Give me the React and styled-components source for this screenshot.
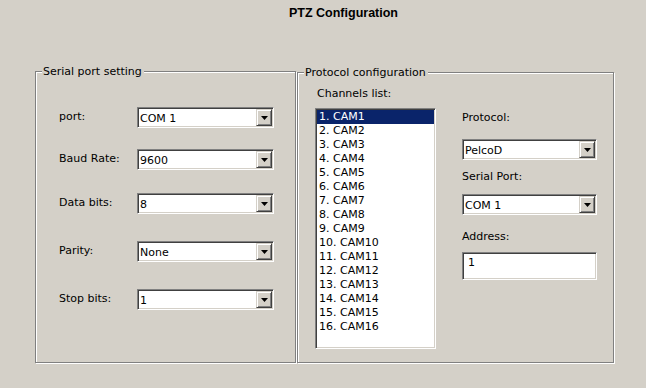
import React from 'react';
import styled, { createGlobalStyle } from 'styled-components';

const GlobalStyle = createGlobalStyle`
  body {
    margin: 0;
    background: #d4d0c8;
    font-family: "DejaVu Sans", "Liberation Sans", sans-serif;
    font-size: 11px;
    color: #000;
  }
`;

const Page = styled.div`
  width: 646px;
  height: 388px;
  background: #d4d0c8;
  display: flex;
  flex-direction: column;
`;

const Title = styled.div`
  margin-top: 5px;
  padding-left: 41px;
  line-height: 16px;
  text-align: center;
  font-family: "Liberation Sans", Arial, sans-serif;
  font-weight: bold;
  font-size: 12.5px;
`;

const Panels = styled.div`
  display: flex;
  align-items: flex-start;
  gap: 1px;
  margin-top: 50px;
  padding-left: 35px;
`;

// etched frame, like a win32 group box
const Group = styled.div`
  position: relative;
  box-sizing: border-box;
  width: ${({ $w }) => $w}px;
  height: ${({ $h }) => $h}px;
  margin-top: ${({ $top }) => $top || 0}px;
  border: 1px solid #808080;
  box-shadow: inset 1px 1px #fff, 1px 1px #fff;
`;

const Legend = styled.div`
  position: absolute;
  top: -7px;
  left: 6px;
  padding: 0 2px 0 1px;
  line-height: 13px;
  background: #d4d0c8;
  white-space: nowrap;
`;

const SerialBody = styled.div`
  display: flex;
  flex-direction: column;
  padding-left: 23px;
`;

const Row = styled.div`
  display: flex;
  align-items: center;
  margin-top: ${({ $top }) => $top}px;
`;

const Label = styled.div`
  width: 78px;
  line-height: 13px;
  padding-bottom: 3px;
  white-space: nowrap;
`;

const Combo = styled.div`
  box-sizing: border-box;
  width: ${({ $w }) => $w}px;
  height: 21px;
  display: flex;
  align-items: center;
  background: #fff;
  border: 1px solid;
  border-color: #808080 #fff #fff #808080;
  box-shadow: inset 1px 1px #404040, inset -1px -1px #d4d0c8;
  padding: 1px 1px 1px 2px;
`;

const ComboText = styled.div`
  flex: 1;
  line-height: 13px;
  padding-top: 1px;
  white-space: nowrap;
`;

const DropButton = styled.div`
  box-sizing: border-box;
  width: 16px;
  height: 17px;
  display: flex;
  align-items: center;
  justify-content: center;
  background: #d4d0c8;
  border: 1px solid;
  border-color: #d4d0c8 #404040 #404040 #d4d0c8;
  box-shadow: inset 1px 1px #fff, inset -1px -1px #808080;
`;

const ProtocolBody = styled.div`
  display: flex;
  padding-left: 17px;
  gap: 26px;
`;

const Column = styled.div`
  display: flex;
  flex-direction: column;
`;

const FieldLabel = styled.div`
  line-height: 13px;
  margin-top: ${({ $top }) => $top}px;
  margin-left: ${({ $left }) => $left || 0}px;
  white-space: nowrap;
`;

const Spaced = styled.div`
  margin-top: ${({ $top }) => $top}px;
`;

const ListBox = styled.div`
  box-sizing: border-box;
  width: 121px;
  height: 241px;
  margin-top: 8px;
  background: #fff;
  border: 1px solid;
  border-color: #808080 #fff #fff #808080;
  box-shadow: inset 1px 1px #404040, inset -1px -1px #d4d0c8;
  padding: 1px;
`;

const ListItem = styled.div`
  height: 14px;
  line-height: 14px;
  padding-left: 2px;
  white-space: nowrap;
  background: ${({ $selected }) => ($selected ? '#0a246a' : 'transparent')};
  color: ${({ $selected }) => ($selected ? '#fff' : '#000')};
`;

const TextInput = styled.div`
  box-sizing: border-box;
  width: 135px;
  height: 28px;
  background: #fff;
  border: 1px solid;
  border-color: #808080 #fff #fff #808080;
  box-shadow: inset 1px 1px #404040, inset -1px -1px #d4d0c8;
  padding: 3px 0 0 5px;
  line-height: 13px;
`;

const Arrow = () => (
  <svg width="7" height="4" viewBox="0 0 7 4">
    <polygon points="0,0 7,0 3.5,4" fill="#000" />
  </svg>
);

const Select = ({ value, width }) => (
  <Combo $w={width}>
    <ComboText>{value}</ComboText>
    <DropButton>
      <Arrow />
    </DropButton>
  </Combo>
);

const serialRows = [
  { label: 'port:', value: 'COM 1', top: 35 },
  { label: 'Baud Rate:', value: '9600', top: 21 },
  { label: 'Data bits:', value: '8', top: 23 },
  { label: 'Parity:', value: 'None', top: 27 },
  { label: 'Stop bits:', value: '1', top: 27 },
];

const channels = Array.from({ length: 16 }, (_, i) => `${i + 1}. CAM${i + 1}`);

export default function App() {
  return (
    <Page>
      <GlobalStyle />
      <Title>PTZ Configuration</Title>
      <Panels>
        <Group $w={261} $h={292}>
          <Legend>Serial port setting</Legend>
          <SerialBody>
            {serialRows.map((row) => (
              <Row key={row.label} $top={row.top}>
                <Label>{row.label}</Label>
                <Select value={row.value} width={137} />
              </Row>
            ))}
          </SerialBody>
        </Group>
        <Group $w={317} $h={291} $top={1}>
          <Legend>Protocol configuration</Legend>
          <ProtocolBody>
            <Column>
              <FieldLabel $top={14} $left={2}>Channels list:</FieldLabel>
              <ListBox>
                {channels.map((name, i) => (
                  <ListItem key={name} $selected={i === 0}>{name}</ListItem>
                ))}
              </ListBox>
            </Column>
            <Column>
              <FieldLabel $top={38}>Protocol:</FieldLabel>
              <Spaced $top={15}>
                <Select value="PelcoD" width={135} />
              </Spaced>
              <FieldLabel $top={10}>Serial Port:</FieldLabel>
              <Spaced $top={11}>
                <Select value="COM 1" width={135} />
              </Spaced>
              <FieldLabel $top={15}>Address:</FieldLabel>
              <Spaced $top={9}>
                <TextInput>1</TextInput>
              </Spaced>
            </Column>
          </ProtocolBody>
        </Group>
      </Panels>
    </Page>
  );
}
